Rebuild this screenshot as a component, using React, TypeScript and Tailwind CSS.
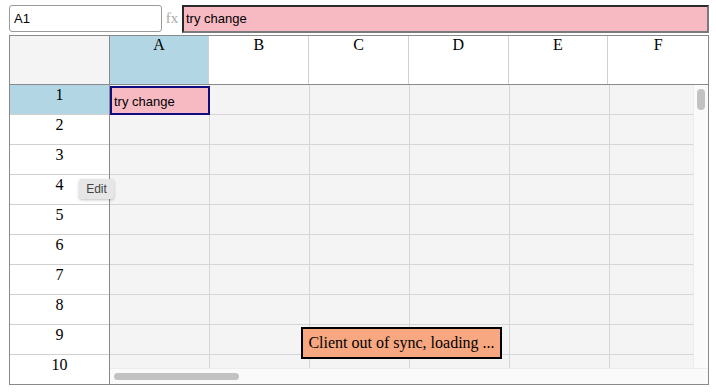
const cols = ["A", "B", "C", "D", "E", "F"];
const rows = [1, 2, 3, 4, 5, 6, 7, 8, 9, 10];

export default function App() {
  return (
    <div className="relative w-[716px] h-[392px] bg-white pl-[9px] pt-[5px] font-['Liberation_Serif',serif] text-black">
      {/* formula bar */}
      <div className="flex items-center h-[27px] w-[700px]">
        <div className="w-[153px] h-[27px] border border-[#9a9a9a] rounded-[3px] flex items-center pl-[4px] text-[13px] font-['Liberation_Sans',Arial,sans-serif]">
          A1
        </div>
        <div className="w-[20px] text-center text-[15px] text-[#aaa]">fx</div>
        <div className="flex-1 h-[28px] bg-[#f7bac3] border-2 border-t-[#2a2a2a] border-l-[#2a2a2a] border-r-[#7a7a7a] border-b-[#7a7a7a] flex items-center pl-[2px] text-[13px] font-['Liberation_Sans',Arial,sans-serif]">
          try change
        </div>
      </div>

      {/* sheet */}
      <div className="mt-[3px] w-[700px] h-[350px] border border-[#8a8a8a] flex flex-col overflow-hidden">
        <div className="flex h-[49px] border-b border-[#8a8a8a] shrink-0">
          <div className="w-[100px] h-full bg-[#f4f4f4] border-r border-[#8a8a8a]" />
          {cols.map((c, i) => (
            <div
              key={c}
              className={`w-[100px] h-full text-center text-[16px] leading-[18px] ${
                i === 0 ? "bg-[#b2d6e4]" : "bg-white"
              } ${i < cols.length - 1 ? "border-r border-[#d0d0d0]" : ""}`}
            >
              {c}
            </div>
          ))}
        </div>

        <div className="flex flex-1 min-h-0">
          <div className="w-[100px] shrink-0 border-r border-[#8a8a8a] flex flex-col">
            {rows.map((r) => (
              <div
                key={r}
                className={`h-[30px] shrink-0 text-center text-[16px] leading-[18px] pt-[1px] ${
                  r === 1 ? "bg-[#b2d6e4]" : "bg-white"
                } ${r < 10 ? "border-b border-[#d0d0d0]" : ""}`}
              >
                {r}
              </div>
            ))}
          </div>

          <div className="flex-1 flex flex-col min-w-0">
            <div className="flex flex-1 min-h-0">
              <div className="flex-1 overflow-hidden bg-[#f4f4f4]">
                {rows.map((r) => (
                  <div key={r} className="flex h-[30px]">
                    {cols.map((c) => (
                      <div
                        key={c}
                        className="w-[100px] h-[30px] shrink-0 border-r border-b border-[#d6d6d6] bg-[#f4f4f4] relative"
                      >
                        {r === 1 && c === "A" && (
                          <div className="absolute left-[0px] top-[1px] w-[100px] h-[29px] bg-[#f7bac3] border-2 border-[#0d0d80] pl-[2px] pt-[6px] text-[13px] leading-[15px] font-['Liberation_Sans',Arial,sans-serif]">
                            try change
                          </div>
                        )}
                      </div>
                    ))}
                  </div>
                ))}
              </div>
              <div className="w-[15px] shrink-0 bg-[#fafafa] border-l border-[#ececec] relative">
                <div className="absolute left-[3px] top-[4px] w-[8px] h-[21px] rounded-full bg-[#c2c2c2]" />
              </div>
            </div>
            <div className="h-[16px] shrink-0 bg-[#fafafa] border-t border-[#ececec] relative">
              <div className="absolute left-[4px] top-[4px] w-[125px] h-[7px] rounded-full bg-[#c2c2c2]" />
            </div>
          </div>
        </div>
      </div>

      {/* tooltip */}
      <div className="absolute left-[79px] top-[179px] w-[35px] h-[20px] rounded-[3px] bg-[#e6e6e6] shadow-[0_1px_3px_rgba(0,0,0,0.25)] flex items-center justify-center text-[12px] text-[#444] font-['Liberation_Sans',Arial,sans-serif]">
        Edit
      </div>

      {/* sync banner */}
      <div className="absolute left-[301px] top-[327px] w-[201px] h-[32px] bg-[#f8a880] border-2 border-black flex items-center justify-center text-[16px]">
        Client out of sync, loading ...
      </div>
    </div>
  );
}
